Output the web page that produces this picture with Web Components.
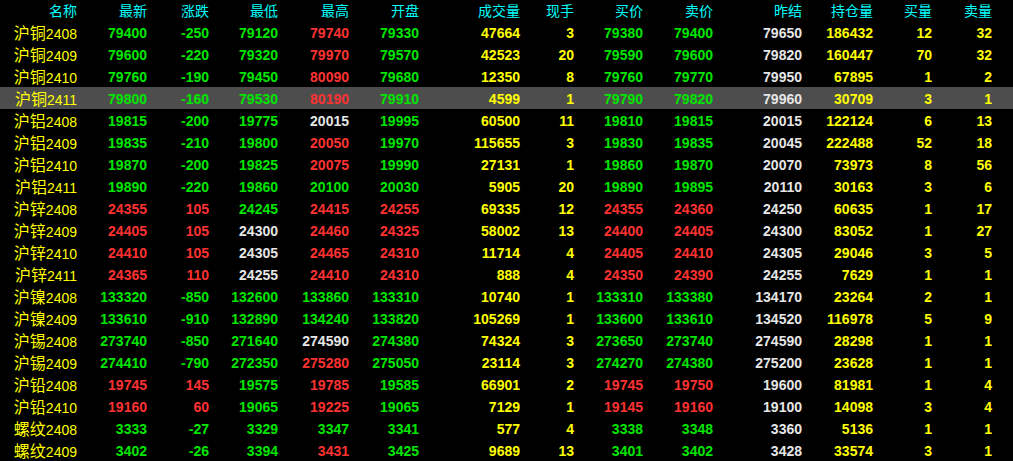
<!DOCTYPE html>
<html lang="zh"><head><meta charset="utf-8"><title>行情</title>
<style>html,body{margin:0;background:#000;height:461px;overflow:hidden}</style></head><body>
<quote-table></quote-table>
<script>
const COLS='77px 70px 62px 69px 71px 70px 101px 54px 69px 70px 89px 71px 59px 60px 21px';
const HEAD=['名称','最新','涨跌','最低','最高','开盘','成交量','现手','买价','卖价','昨结','持仓量','买量','卖量'];
const DATA=`沪铜2408 79400 -250 79120 79740 79330 47664 3 79380 79400 79650 186432 12 32
沪铜2409 79600 -220 79320 79970 79570 42523 20 79590 79600 79820 160447 70 32
沪铜2410 79760 -190 79450 80090 79680 12350 8 79760 79770 79950 67895 1 2
沪铜2411 79800 -160 79530 80190 79910 4599 1 79790 79820 79960 30709 3 1
沪铝2408 19815 -200 19775 20015 19995 60500 11 19810 19815 20015 122124 6 13
沪铝2409 19835 -210 19800 20050 19970 115655 3 19830 19835 20045 222488 52 18
沪铝2410 19870 -200 19825 20075 19990 27131 1 19860 19870 20070 73973 8 56
沪铝2411 19890 -220 19860 20100 20030 5905 20 19890 19895 20110 30163 3 6
沪锌2408 24355 105 24245 24415 24255 69335 12 24355 24360 24250 60635 1 17
沪锌2409 24405 105 24300 24460 24325 58002 13 24400 24405 24300 83052 1 27
沪锌2410 24410 105 24305 24465 24310 11714 4 24405 24410 24305 29046 3 5
沪锌2411 24365 110 24255 24410 24310 888 4 24350 24390 24255 7629 1 1
沪镍2408 133320 -850 132600 133860 133310 10740 1 133310 133380 134170 23264 2 1
沪镍2409 133610 -910 132890 134240 133820 105269 1 133600 133610 134520 116978 5 9
沪锡2408 273740 -850 271640 274590 274380 74324 3 273650 273740 274590 28298 1 1
沪锡2409 274410 -790 272350 275280 275050 23114 3 274270 274380 275200 23628 1 1
沪铅2408 19745 145 19575 19785 19585 66901 2 19745 19750 19600 81981 1 4
沪铅2410 19160 60 19065 19225 19065 7129 1 19145 19160 19100 14098 3 4
螺纹2408 3333 -27 3329 3347 3341 577 4 3338 3348 3360 5136 1 1
螺纹2409 3402 -26 3394 3431 3425 9689 13 3401 3402 3428 33574 3 1`.split('\n').map(l=>l.split(' '));

class QuoteCell extends HTMLElement{
  constructor(){super();this.attachShadow({mode:'open'}).innerHTML=`<style>:host{display:block;text-align:right;white-space:nowrap;min-width:0}</style><slot></slot>`;}
}
class QuoteRow extends HTMLElement{
  constructor(){super();this.attachShadow({mode:'open'}).innerHTML=`<style>
  :host{display:grid;grid-template-columns:${COLS};height:22px;align-items:center;
    font:bold 14px/22px "Liberation Sans","Noto Sans CJK SC",sans-serif}
  :host([selected]){background:#4d4d4d}
  :host([header]){height:21px;color:#0ff;font:14px/21px "Noto Sans CJK SC",sans-serif}
  </style><slot></slot>`;}
}
class NameCell extends HTMLElement{
  constructor(){super();this.attachShadow({mode:'open'}).innerHTML=`<style>
  :host{display:block;text-align:right;white-space:nowrap;color:#ff0;font:16px/22px "Noto Sans CJK SC",sans-serif}
  ::slotted(span){font:14px/22px "Liberation Sans",sans-serif}
  </style><slot></slot>`;}
}
class QuoteTable extends HTMLElement{
  constructor(){super();const s=this.attachShadow({mode:'open'});
    s.innerHTML=`<style>:host{display:block;width:1013px;height:461px;background:#000;overflow:hidden}</style><slot></slot>`;}
  connectedCallback(){
    const RED='#ff3232',GREEN='#00e600',WHITE='#e6e6e6',YEL='#ff0';
    const cell=(t,c)=>{const e=document.createElement('quote-cell');e.textContent=t;if(c)e.style.color=c;return e;};
    const h=document.createElement('quote-row');h.setAttribute('header','');
    HEAD.forEach(t=>h.append(cell(t)));this.append(h);
    DATA.forEach((d,i)=>{
      const r=document.createElement('quote-row');if(i===3)r.setAttribute('selected','');
      const n=document.createElement('name-cell');const sp=document.createElement('span');sp.textContent=d[0].slice(2);
      n.append(d[0].slice(0,2),sp);r.append(n);
      const pc=+d[10],cmp=v=>+v>pc?RED:+v<pc?GREEN:WHITE;
      d.slice(1).forEach((v,k)=>{const ix=k+1;let c=YEL;
        if([1,3,4,5,8,9].includes(ix))c=cmp(v);
        else if(ix===2)c=+v<0?GREEN:RED;
        else if(ix===10)c=WHITE;
        r.append(cell(v,c));});
      this.append(r);
    });
  }
}
customElements.define('quote-cell',QuoteCell);
customElements.define('name-cell',NameCell);
customElements.define('quote-row',QuoteRow);
customElements.define('quote-table',QuoteTable);
</script></body></html>
